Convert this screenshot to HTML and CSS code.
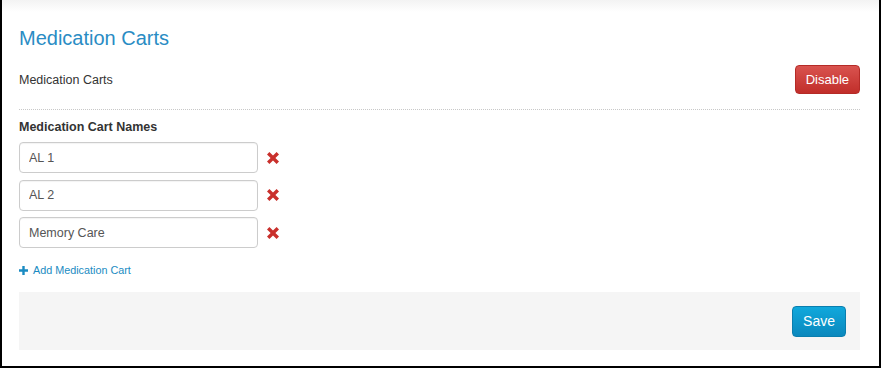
FILE: index.html
```html
<!DOCTYPE html>
<html lang="en">
<head>
<meta charset="utf-8">
<title>Medication Carts</title>
<link rel="stylesheet" href="styles.css">
</head>
<body>
<div class="frame">
  <h1 class="title">Medication Carts</h1>
  <div class="setting-row">
    <span class="setting-label">Medication Carts</span>
    <button class="btn btn-danger" type="button">Disable</button>
  </div>
  <div class="divider"></div>
  <div class="names-label">Medication Cart Names</div>
  <div class="cart-list">
    <div class="cart-row">
      <input class="cart-input" type="text" value="AL 1">
      <span class="remove" aria-label="Remove"><svg viewBox="0 0 12 12" width="12" height="12"><path d="M0 2.4 2.4 0 6 3.6 9.6 0 12 2.4 8.4 6 12 9.6 9.6 12 6 8.4 2.4 12 0 9.6 3.6 6Z"/></svg></span>
    </div>
    <div class="cart-row">
      <input class="cart-input" type="text" value="AL 2">
      <span class="remove" aria-label="Remove"><svg viewBox="0 0 12 12" width="12" height="12"><path d="M0 2.4 2.4 0 6 3.6 9.6 0 12 2.4 8.4 6 12 9.6 9.6 12 6 8.4 2.4 12 0 9.6 3.6 6Z"/></svg></span>
    </div>
    <div class="cart-row">
      <input class="cart-input" type="text" value="Memory Care">
      <span class="remove" aria-label="Remove"><svg viewBox="0 0 12 12" width="12" height="12"><path d="M0 2.4 2.4 0 6 3.6 9.6 0 12 2.4 8.4 6 12 9.6 9.6 12 6 8.4 2.4 12 0 9.6 3.6 6Z"/></svg></span>
    </div>
  </div>
  <a class="add-link" href="#"><svg class="plus" viewBox="0 0 9 9" width="9" height="9"><path d="M3.3 0h2.4v3.3H9v2.4H5.7V9H3.3V5.7H0V3.3h3.3Z"/></svg>Add Medication Cart</a>
  <div class="footer">
    <button class="btn btn-primary" type="button">Save</button>
  </div>
</div>
</body>
</html>
```

FILE: styles.css
```css
html, body {
  margin: 0;
  padding: 0;
  background: #fff;
}

body {
  font-family: "Liberation Sans", Arial, sans-serif;
  color: #333;
}

.frame {
  box-sizing: border-box;
  width: 881px;
  height: 368px;
  border-left: 2px solid #000;
  border-right: 2px solid #000;
  border-bottom: 2px solid #000;
  background: linear-gradient(to bottom, #f3f3f3 0px, #fff 12px);
  padding: 0 19px 0 17px;
  display: flex;
  flex-direction: column;
}

.title {
  margin: 27px 0 0;
  font-size: 20px;
  line-height: 22px;
  font-weight: normal;
  color: #2a8cc4;
}

.setting-row {
  margin-top: 16px;
  display: flex;
  align-items: center;
  justify-content: space-between;
}

.setting-label {
  font-size: 12.5px;
  color: #333;
}

.btn {
  font-family: "Liberation Sans", Arial, sans-serif;
  color: #fff;
  border-radius: 4px;
  cursor: pointer;
  box-sizing: border-box;
}

.btn-danger {
  height: 29px;
  padding: 0 10px;
  font-size: 13px;
  background: linear-gradient(to bottom, #d9534f, #c12e2a);
  border: 1px solid #b52b27;
}

.divider {
  margin-top: 15px;
  border-top: 1px dotted #c8c8c8;
}

.names-label {
  margin-top: 8px;
  font-size: 12.5px;
  line-height: 18px;
  font-weight: bold;
  color: #333;
}

.cart-list {
  margin-top: 6px;
  display: flex;
  flex-direction: column;
  gap: 6.5px;
}

.cart-row {
  display: flex;
  align-items: center;
  gap: 9px;
}

.cart-input {
  box-sizing: border-box;
  width: 239px;
  height: 31px;
  margin: 0;
  padding: 0 9px;
  border: 1px solid #ccc;
  border-radius: 4px;
  font-family: "Liberation Sans", Arial, sans-serif;
  font-size: 12.5px;
  color: #555;
  background: #fff;
  box-shadow: inset 0 1px 1px rgba(0, 0, 0, 0.05);
}

.remove {
  display: flex;
  width: 12px;
  height: 12px;
}

.remove svg {
  fill: #c9302c;
}

.add-link {
  margin-top: 15px;
  align-self: flex-start;
  display: flex;
  align-items: center;
  gap: 5px;
  font-size: 10.8px;
  line-height: 15px;
  color: #1a8bc2;
  text-decoration: none;
}

.plus {
  fill: #1a8bc2;
}

.footer {
  margin-top: 14px;
  height: 58px;
  box-sizing: border-box;
  background: #f5f5f5;
  display: flex;
  justify-content: flex-end;
  align-items: center;
  padding: 0 14px;
}

.btn-primary {
  height: 31px;
  padding: 0 10px;
  font-size: 14px;
  background: linear-gradient(to bottom, #10a8dc, #0b88bd);
  border: 1px solid #0a7eae;
}
```
